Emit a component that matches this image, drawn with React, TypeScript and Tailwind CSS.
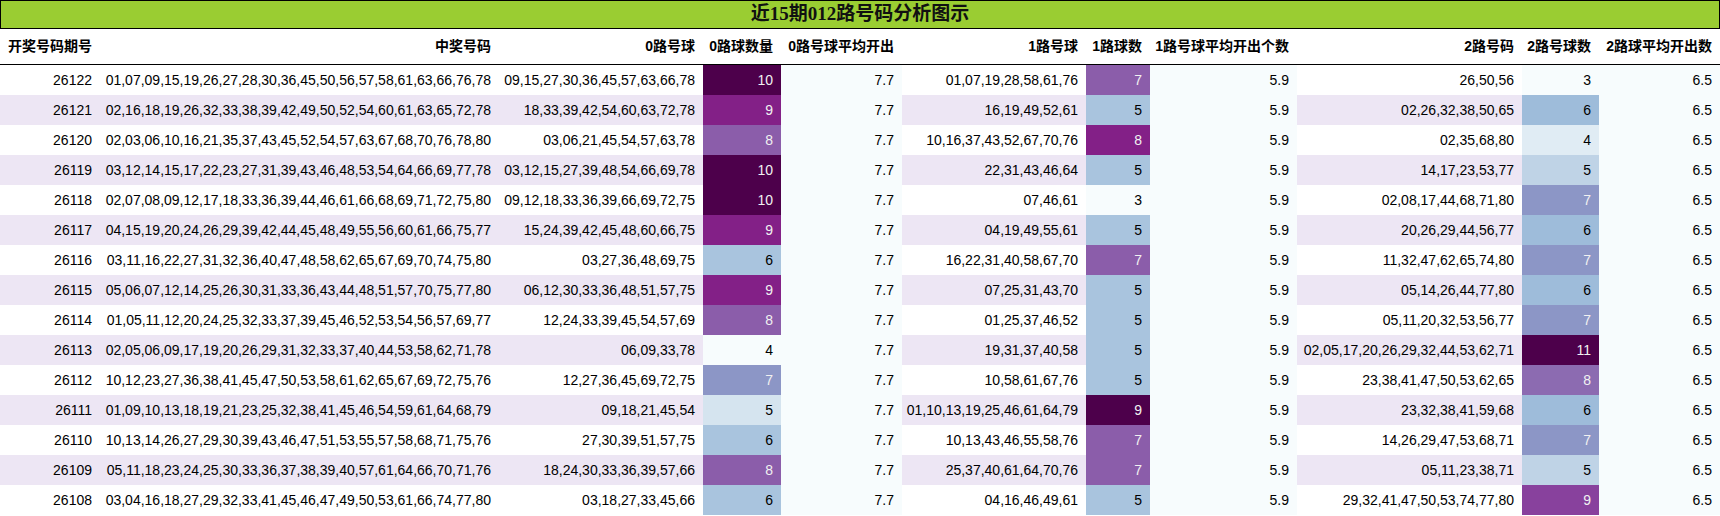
const DRAWS: [string, string][] = [
  ["26122", "01,07,09,15,19,26,27,28,30,36,45,50,56,57,58,61,63,66,76,78"],
  ["26121", "02,16,18,19,26,32,33,38,39,42,49,50,52,54,60,61,63,65,72,78"],
  ["26120", "02,03,06,10,16,21,35,37,43,45,52,54,57,63,67,68,70,76,78,80"],
  ["26119", "03,12,14,15,17,22,23,27,31,39,43,46,48,53,54,64,66,69,77,78"],
  ["26118", "02,07,08,09,12,17,18,33,36,39,44,46,61,66,68,69,71,72,75,80"],
  ["26117", "04,15,19,20,24,26,29,39,42,44,45,48,49,55,56,60,61,66,75,77"],
  ["26116", "03,11,16,22,27,31,32,36,40,47,48,58,62,65,67,69,70,74,75,80"],
  ["26115", "05,06,07,12,14,25,26,30,31,33,36,43,44,48,51,57,70,75,77,80"],
  ["26114", "01,05,11,12,20,24,25,32,33,37,39,45,46,52,53,54,56,57,69,77"],
  ["26113", "02,05,06,09,17,19,20,26,29,31,32,33,37,40,44,53,58,62,71,78"],
  ["26112", "10,12,23,27,36,38,41,45,47,50,53,58,61,62,65,67,69,72,75,76"],
  ["26111", "01,09,10,13,18,19,21,23,25,32,38,41,45,46,54,59,61,64,68,79"],
  ["26110", "10,13,14,26,27,29,30,39,43,46,47,51,53,55,57,58,68,71,75,76"],
  ["26109", "05,11,18,23,24,25,30,33,36,37,38,39,40,57,61,64,66,70,71,76"],
  ["26108", "03,04,16,18,27,29,32,33,41,45,46,47,49,50,53,61,66,74,77,80"],
];

const HEADERS = [
  "开奖号码期号",
  "中奖号码",
  "0路号球",
  "0路球数量",
  "0路号球平均开出",
  "1路号球",
  "1路球数",
  "1路号球平均开出个数",
  "2路号码",
  "2路号球数",
  "2路球平均开出数",
];

const COLS =
  "grid grid-cols-[100px_399px_204px_78px_121px_184px_64px_147px_225px_77px_121px]";

// matplotlib BuPu stops
const BUPU = ["#f7fcfd", "#e0ecf4", "#bfd3e6", "#9ebcda", "#8c96c6", "#8c6bb1", "#88419d", "#810f7c", "#4d004b"];

const hex = (h: string) => [1, 3, 5].map((i) => parseInt(h.slice(i, i + 2), 16));

const bupu = (t: number) => {
  const x = Math.max(0, Math.min(1, t)) * 8;
  const i = Math.min(7, Math.floor(x));
  const f = x - i;
  const a = hex(BUPU[i]);
  const b = hex(BUPU[i + 1]);
  const c = a.map((v, k) => Math.round(v + (b[k] - v) * f));
  return `rgb(${c[0]},${c[1]},${c[2]})`;
};

const rows = DRAWS.map(([issue, nums]) => {
  const list = nums.split(",");
  const groups = [0, 1, 2].map((m) => list.filter((n) => Number(n) % 3 === m));
  return { issue, nums, groups };
});

const counts = [0, 1, 2].map((m) => rows.map((r) => r.groups[m].length));
const avgs = counts.map((c) => (c.reduce((s, v) => s + v, 0) / c.length).toFixed(1));

const Cell = ({ children, className = "", style }: { children: React.ReactNode; className?: string; style?: React.CSSProperties }) => (
  <div className={`flex items-center justify-end pr-2 whitespace-nowrap ${className}`} style={style}>
    {children}
  </div>
);

const CountCell = ({ m, v }: { m: number; v: number }) => {
  const min = Math.min(...counts[m]);
  const max = Math.max(...counts[m]);
  const t = (v - min) / (max - min);
  return (
    <Cell style={{ backgroundColor: bupu(t), color: t >= 0.45 ? "#f1f1f1" : "#000000" }}>{v}</Cell>
  );
};

export default function App() {
  return (
    <div className="w-[1720px] bg-white text-black text-[14px] font-['Liberation_Sans','Noto_Sans_CJK_SC',sans-serif]">
      <div className="h-[29px] border border-black bg-[#9acd32] flex items-center justify-center">
        <h1 className="text-[19px] font-bold text-[#111] font-['Liberation_Serif','Noto_Sans_CJK_SC',serif]">
          近15期012路号码分析图示
        </h1>
      </div>

      <div className={`${COLS} h-[36px] border-b border-black font-bold`}>
        {HEADERS.map((h) => (
          <Cell key={h}>{h}</Cell>
        ))}
      </div>

      {rows.map((r, i) => (
        <div key={r.issue} className={`${COLS} h-[30px] ${i % 2 === 1 ? "bg-[#ede6f4]" : "bg-white"}`}>
          <Cell>{r.issue}</Cell>
          <Cell>{r.nums}</Cell>
          <Cell>{r.groups[0].join(",")}</Cell>
          <CountCell m={0} v={r.groups[0].length} />
          <Cell className="bg-[#f7fcfd]">{avgs[0]}</Cell>
          <Cell>{r.groups[1].join(",")}</Cell>
          <CountCell m={1} v={r.groups[1].length} />
          <Cell className="bg-[#f7fcfd]">{avgs[1]}</Cell>
          <Cell>{r.groups[2].join(",")}</Cell>
          <CountCell m={2} v={r.groups[2].length} />
          <Cell className="bg-[#f7fcfd]">{avgs[2]}</Cell>
        </div>
      ))}
    </div>
  );
}
